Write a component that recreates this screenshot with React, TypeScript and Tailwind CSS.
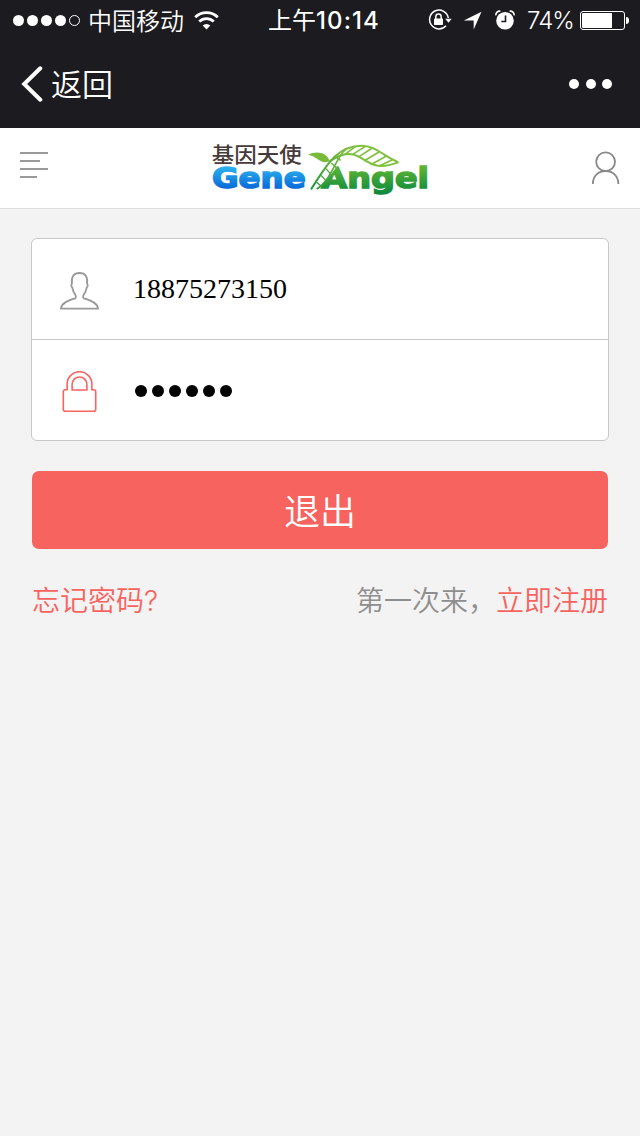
import { useState } from "react";

const StatusBar = () => {
    return (
        <div className="flex h-10 items-center pl-[13px] text-[24px] leading-10 text-white">
            <div className="flex w-[67px] shrink-0 gap-[3px]">
                <span className="size-[11px] rounded-full bg-white" />
                <span className="size-[11px] rounded-full bg-white" />
                <span className="size-[11px] rounded-full bg-white" />
                <span className="size-[11px] rounded-full bg-white" />
                <span className="size-[11px] rounded-full border border-white" />
            </div>
            <span className="ml-[8px] w-[97px] shrink-0 whitespace-nowrap font-[350]">中国移动</span>
            <svg className="ml-[9px] h-[19px] w-[25px] shrink-0" viewBox="0 0 25 19" fill="none" stroke="#fff">
                <path d="M1.2 6.2a16 16 0 0 1 22.6 0" strokeWidth="2.8" />
                <path d="M5.2 10.6a10.5 10.5 0 0 1 14.6 0" strokeWidth="2.8" />
                <path d="M12.5 18.5 8.7 14.6a5.4 5.4 0 0 1 7.6 0z" fill="#fff" stroke="none" />
            </svg>
            <span className="ml-[49px] w-[112px] shrink-0 whitespace-nowrap">
                上午<span className="font-[Inter] font-medium tracking-[1.1px]">10:14</span>
            </span>
            <svg className="ml-[48px] h-[22px] w-[24px] shrink-0" viewBox="0 0 24 22" fill="none" stroke="#fff" strokeWidth="1.5">
                <path d="M20.3 9A9.4 9.4 0 1 0 18 16.8" />
                <path d="M17.2 9.8h6.6l-3.3 4z" fill="#fff" stroke="none" />
                <path d="M7.8 10V7.7a2.7 2.7 0 0 1 5.4 0V10" />
                <rect x="6" y="9.6" width="9" height="6.4" rx=".8" fill="#fff" stroke="none" />
            </svg>
            <svg className="ml-[11px] h-[19px] w-[19px] shrink-0" viewBox="0 0 18 19" fill="#fff">
                <path d="M18 .8 10.2 18.5V9.6H.3z" />
            </svg>
            <svg className="ml-[13px] h-[20px] w-[20px] shrink-0" viewBox="0 0 20 20">
                <circle cx="10" cy="10.8" r="8.8" fill="#fff" />
                <path d="M.9 5.4C.7 2.6 2.7.9 5.4 1.2M14.6 1.2c2.7-.3 4.7 1.4 4.5 4.2" fill="none" stroke="#fff" strokeWidth="1.6" />
                <path d="M10.5 5.5v6H6.3" fill="none" stroke="#1c1b20" strokeWidth="1.6" />
            </svg>
            <span className="mt-[2px] ml-[12px] w-[47px] shrink-0 whitespace-nowrap font-[Inter] font-[350] tracking-[-0.9px]">74%</span>
            <div className="ml-[6px] flex h-[19px] w-[45px] shrink-0 rounded-[3px] border border-white p-px">
                <span className="h-full w-[30px] rounded-l-[1px] bg-white" />
            </div>
            <span className="ml-px h-[7px] w-[3px] shrink-0 rounded-r-full bg-white" />
        </div>
    );
};

const NavBar = () => {
    return (
        <div className="flex h-[88px] items-center justify-between pr-7 pl-[21px] text-white">
            <button className="flex items-center">
                <svg className="h-9 w-[22px]" viewBox="0 0 22 36" fill="none" stroke="#fff" strokeWidth="4" strokeLinecap="round">
                    <path d="M19.3 2.3 3.2 18l16.1 15.7" strokeLinejoin="miter" />
                </svg>
                <span className="mb-[2px] ml-[8px] text-[31px] font-[350] leading-10">返回</span>
            </button>
            <div className="flex gap-[6.5px]">
                <span className="size-[10px] rounded-full bg-white" />
                <span className="size-[10px] rounded-full bg-white" />
                <span className="size-[10px] rounded-full bg-white" />
            </div>
        </div>
    );
};

const Logo = () => {
    return (
        <svg className="h-[70px] w-[240px]" viewBox="0 0 720 210">
            <defs>
                <linearGradient id="blue" gradientUnits="userSpaceOnUse" x1="0" y1="94" x2="0" y2="162">
                    <stop offset="0" stopColor="#2db4ee" />
                    <stop offset="1" stopColor="#0768d8" />
                </linearGradient>
                <linearGradient id="green" gradientUnits="userSpaceOnUse" x1="0" y1="94" x2="0" y2="176">
                    <stop offset="0" stopColor="#62b534" />
                    <stop offset="1" stopColor="#0b8a3c" />
                </linearGradient>
                <linearGradient id="leaf" gradientUnits="userSpaceOnUse" x1="330" y1="163" x2="440" y2="50">
                    <stop offset="0" stopColor="#22943b" />
                    <stop offset="1" stopColor="#7fc03d" />
                </linearGradient>
            </defs>
            <text x="35" y="81" fontSize="63" fontWeight="500" fill="#463b3a" textLength="270" lengthAdjust="spacingAndGlyphs">基因天使</text>
            <g fontFamily="DejaVu Sans" fontWeight="700" strokeWidth="4.5">
                <text x="36" y="158" fontSize="84" fill="url(#blue)" stroke="url(#blue)" textLength="281" lengthAdjust="spacingAndGlyphs">Gene</text>
                <text x="364" y="158" fontSize="84" fill="url(#green)" stroke="url(#green)" textLength="323" lengthAdjust="spacingAndGlyphs">Angel</text>
            </g>
            <path d="M324 59c26-13 58-7 65 20-28 10-36-14-65-20z" fill="#79ba3b" />
            {/* helix stem, cut out of the letter behind it */}
            <path d="M333 163C368 108 395 72 428 56c-10 26-30 66-78 106z" fill="#fff" />
            <g fill="none" stroke="url(#leaf)" strokeWidth="5">
                <path d="M333 163C376 98 408 32 484 32c44 0 62 29 111 50" strokeWidth="6" />
                <path d="M350 162c46-28 56-92 86-118" />
                <path d="M387 81c34-26 66-31 93-14 36 23 54 37 115 15" strokeWidth="6" />
                <path d="M350 142l13 11M363 121l17 18M378 101l17 20M394 84l15 14M410 68l12 8" strokeWidth="4" />
                <path d="M434 59l32-24M458 58l38-24M477 65l40-26M493 77l44-26M512 89l46-25M537 93l39-18" strokeWidth="5" />
            </g>
        </svg>
    );
};

const Header = () => {
    return (
        <header className="flex h-[81px] items-start border-b border-[#ddd] bg-white pt-[7px] pl-5">
            <button className="mt-[17px] flex w-7 flex-col gap-[6px]">
                <span className="h-[2px] w-7 bg-[#999]" />
                <span className="h-[2px] w-5 bg-[#999]" />
                <span className="h-[2px] w-7 bg-[#999]" />
                <span className="h-[2px] w-[17px] bg-[#999]" />
            </button>
            <div className="ml-[152px]">
                <Logo />
            </div>
            <svg className="mt-[16px] ml-[151px] h-[34px] w-[29px]" viewBox="0 0 29 34" fill="none" stroke="#888" strokeWidth="1.8">
                <circle cx="14.6" cy="10.7" r="9.4" />
                <path d="M1.8 33c0-7.8 5.4-13 12.8-13s12.8 5.2 12.8 13" />
            </svg>
        </header>
    );
};

const App = () => {
    const [phone, setPhone] = useState<string>("18875273150");

    return (
        <div className="min-h-[1136px] w-[640px] bg-[#f3f3f3] font-['Noto_Sans_CJK_SC',sans-serif]">
            <div className="bg-[#1c1b20]">
                <StatusBar />
                <NavBar />
            </div>
            <Header />
            <main className="px-[31px] pt-[29px]">
                <div className="rounded-[6px] border border-[#c8c8c8] bg-white">
                    <div className="flex h-[101px] items-center border-b border-[#c8c8c8] pl-[28px]">
                        <svg className="mt-[3px] h-[38px] w-[39px]" viewBox="0 0 39 38" fill="none" stroke="#999" strokeWidth="1.8">
                            <path d="M1 36.7c0-5 8-8.6 14-10.3 1.1-.4 1.1-2.4.4-3.5-1.7-2.5-2.7-4.5-3.1-7.3-1.3-.8-1.200-3.500-.4-3.900C11.2 5 13.5 1 19.500 1s8.300 4 7.600 10.700c.8.4.9 3.100-.4 3.900-.4 2.800-1.400 4.800-3.100 7.300-.7 1.100-.7 3.100.4 3.500 6 1.700 14 5.300 14 10.300z" />
                        </svg>
                        <input
                            value={phone}
                            onChange={(e) => setPhone(e.target.value)}
                            name="phone"
                            type="text"
                            className="ml-[34px] h-12 w-[400px] bg-transparent font-['Liberation_Serif',serif] text-[28px] text-black outline-none"
                        />
                    </div>
                    <div className="flex h-[100px] items-center pl-[30px]">
                        <svg className="mt-[2px] h-[41px] w-[35px]" viewBox="0 0 34 41" fill="none" stroke="#f7635f" strokeWidth="1.6">
                            <path d="M4.6 18.8v-5.7a12.4 12.4 0 0 1 24.8 0v5.7h1.8a2 2 0 0 1 2 2v17.4a2 2 0 0 1-2 2H2.8a2 2 0 0 1-2-2V20.8a2 2 0 0 1 2-2z" />
                            <path d="M9.6 19v-5.6a7.4 7.4 0 0 1 14.8 0V19z" />
                        </svg>
                        <div className="mt-[2px] ml-[38px] flex gap-[5px]">
                            <span className="size-[12px] rounded-full bg-black" />
                            <span className="size-[12px] rounded-full bg-black" />
                            <span className="size-[12px] rounded-full bg-black" />
                            <span className="size-[12px] rounded-full bg-black" />
                            <span className="size-[12px] rounded-full bg-black" />
                            <span className="size-[12px] rounded-full bg-black" />
                        </div>
                    </div>
                </div>
                <div className="px-px">
                    <button className="mt-[30px] h-[78px] w-full rounded-[7px] bg-[#f7635f] pb-[3px] text-[36px] font-[350] text-white">
                        退出
                    </button>
                    <div className="mt-[30px] flex justify-between text-[28px] font-[350] leading-10 text-[#f7635f]">
                        <a>
                            忘记密码<span className="font-[Inter]">?</span>
                        </a>
                        <p className="text-[#8e8e8e]">
                            第一次来，<a className="text-[#f7635f]">立即注册</a>
                        </p>
                    </div>
                </div>
            </main>
        </div>
    );
};

export default App;
